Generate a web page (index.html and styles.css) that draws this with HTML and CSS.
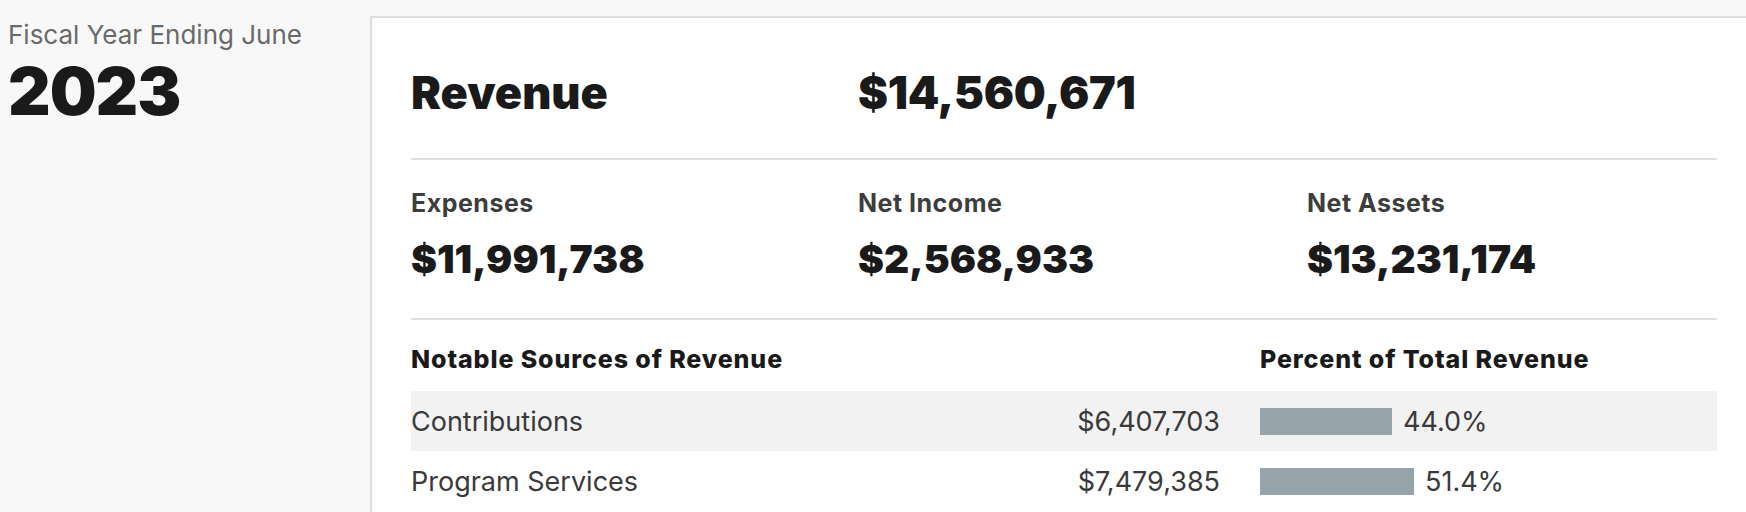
FILE: index.html
```html
<!DOCTYPE html>
<html lang="en">
<head>
<meta charset="utf-8">
<title>Fiscal Year 2023</title>
<link rel="stylesheet" href="styles.css">
</head>
<body>
<div class="page">
  <aside class="year">
    <div class="fy-label">Fiscal Year Ending June</div>
    <div class="fy">2023</div>
  </aside>
  <section class="card">
    <div class="rev-row">
      <h2 class="rev-title">Revenue</h2>
      <div class="rev-value">$14,560,671</div>
    </div>
    <div class="stats">
      <div class="stat">
        <div class="stat-label">Expenses</div>
        <div class="stat-value">$11,991,738</div>
      </div>
      <div class="stat">
        <div class="stat-label">Net Income</div>
        <div class="stat-value">$2,568,933</div>
      </div>
      <div class="stat">
        <div class="stat-label">Net Assets</div>
        <div class="stat-value">$13,231,174</div>
      </div>
    </div>
    <div class="sources">
      <div class="src-head">
        <div class="src-h">Notable Sources of Revenue</div>
        <div class="src-h">Percent of Total Revenue</div>
      </div>
      <div class="src-row alt">
        <div class="src-main"><span class="src-name">Contributions</span><span class="src-amt">$6,407,703</span></div>
        <div class="src-pct"><span class="bar" style="width:132px"></span><span class="pct">44.0%</span></div>
      </div>
      <div class="src-row">
        <div class="src-main"><span class="src-name">Program Services</span><span class="src-amt">$7,479,385</span></div>
        <div class="src-pct"><span class="bar" style="width:154px"></span><span class="pct">51.4%</span></div>
      </div>
    </div>
  </section>
</div>
</body>
</html>
```

FILE: styles.css
```css
html, body {
  margin: 0;
  padding: 0;
  background: #f8f8f8;
}
body {
  font-family: Inter, "Liberation Sans", sans-serif;
  color: #1a1a1a;
}
.page {
  display: flex;
  align-items: flex-start;
  height: 512px;
  overflow: hidden;
}
.year {
  width: 362px;
  flex: 0 0 362px;
  padding: 19px 0 0 8px;
}
.fy-label {
  font-size: 26px;
  line-height: 32px;
  color: #6a6a6a;
  font-weight: 400;
}
.fy {
  font-size: 66px;
  line-height: 70px;
  font-weight: 900;
  letter-spacing: -1px;
  color: #1a1a1a;
  margin-top: 5px;
}
.card {
  flex: 1;
  margin-top: 16px;
  background: #fff;
  border-top: 2px solid #dedede;
  border-left: 2px solid #dedede;
  padding: 0 29px 0 39px;
  min-height: 600px;
}
.rev-row {
  display: grid;
  grid-template-columns: 447px 1fr;
  align-items: center;
  padding: 47px 0 37px;
  border-bottom: 2px solid #dedede;
}
.rev-title {
  margin: 0;
  font-size: 45px;
  line-height: 56px;
  font-weight: 900;
}
.rev-value {
  font-size: 45px;
  line-height: 56px;
  font-weight: 900;
  letter-spacing: -0.3px;
  font-variant-numeric: proportional-nums;
}
.stats {
  display: grid;
  grid-template-columns: 447px 449px 1fr;
  padding: 29px 0 33px;
  border-bottom: 2px solid #dedede;
}
.stat-label {
  font-size: 25px;
  line-height: 28px;
  font-weight: 650;
  letter-spacing: 0.5px;
  color: #3d3d3d;
}
.stat-value {
  margin-top: 16px;
  font-size: 39px;
  line-height: 52px;
  font-weight: 900;
  font-variant-numeric: proportional-nums;
}
.sources {
  padding-top: 24px;
}
.src-head {
  display: grid;
  grid-template-columns: 1fr 457px;
  column-gap: 40px;
  padding-bottom: 17px;
}
.src-h {
  font-size: 25px;
  line-height: 30px;
  font-weight: 800;
  letter-spacing: 0.9px;
}
.src-row {
  display: grid;
  grid-template-columns: 1fr 457px;
  column-gap: 40px;
  align-items: center;
  height: 60px;
  font-size: 27px;
  color: #3a3a3a;
}
.src-row.alt {
  background: #f2f2f2;
}
.src-main {
  display: flex;
  justify-content: space-between;
}
.src-pct {
  display: flex;
  align-items: center;
  gap: 11px;
}
.bar {
  display: block;
  height: 27px;
  background: #96a3ab;
}
```
